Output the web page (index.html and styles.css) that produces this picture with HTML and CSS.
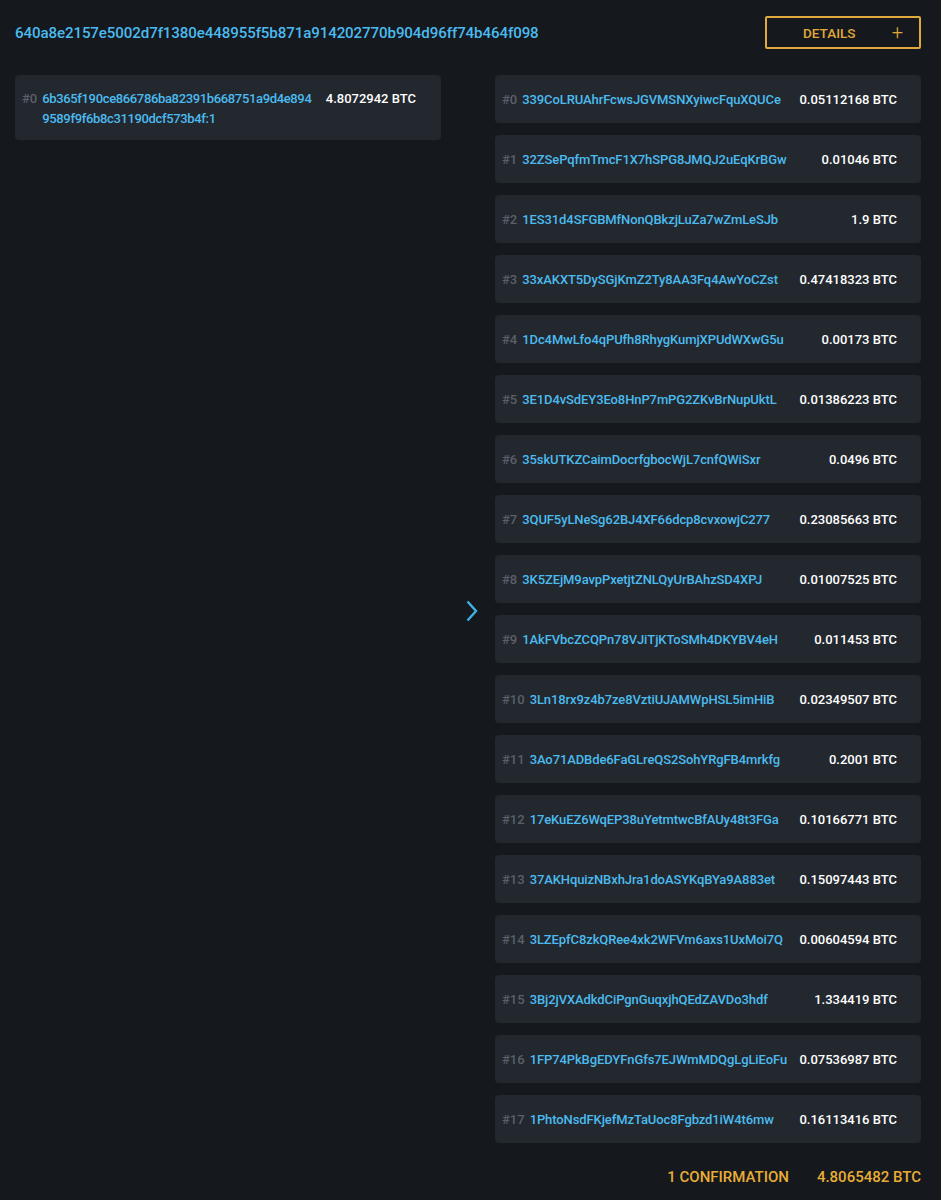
FILE: index.html
```html
<!DOCTYPE html>
<html>
<head>
<meta charset="utf-8">
<link rel="stylesheet" href="styles.css">
</head>
<body>
<div class="page">
  <header class="head">
    <a class="txid">640a8e2157e5002d7f1380e448955f5b871a914202770b904d96ff74b464f098</a>
    <button class="details">DETAILS <span class="plus">+</span></button>
  </header>
  <main class="flow">
    <section class="col">
      <div class="io io-in">
        <span class="idx">#0</span>
        <span class="addr addr-wrap">6b365f190ce866786ba82391b668751a9d4e894<br>9589f9f6b8c31190dcf573b4f:1</span>
        <span class="amt amt-in">4.8072942 BTC</span>
      </div>
    </section>
    <div class="arrow">
      <svg width="14" height="22" viewBox="0 0 14 22"><path d="M2.5 1.5 L11 11 L2.5 20.5" fill="none" stroke="#3fb0e8" stroke-width="2.4"/></svg>
    </div>
    <section class="col outs">
      <div class="io"><span class="lead"><span class="idx">#0</span><span class="addr">339CoLRUAhrFcwsJGVMSNXyiwcFquXQUCe</span></span><span class="amt">0.05112168 BTC</span></div>
      <div class="io"><span class="lead"><span class="idx">#1</span><span class="addr">32ZSePqfmTmcF1X7hSPG8JMQJ2uEqKrBGw</span></span><span class="amt">0.01046 BTC</span></div>
      <div class="io"><span class="lead"><span class="idx">#2</span><span class="addr">1ES31d4SFGBMfNonQBkzjLuZa7wZmLeSJb</span></span><span class="amt">1.9 BTC</span></div>
      <div class="io"><span class="lead"><span class="idx">#3</span><span class="addr">33xAKXT5DySGjKmZ2Ty8AA3Fq4AwYoCZst</span></span><span class="amt">0.47418323 BTC</span></div>
      <div class="io"><span class="lead"><span class="idx">#4</span><span class="addr">1Dc4MwLfo4qPUfh8RhygKumjXPUdWXwG5u</span></span><span class="amt">0.00173 BTC</span></div>
      <div class="io"><span class="lead"><span class="idx">#5</span><span class="addr">3E1D4vSdEY3Eo8HnP7mPG2ZKvBrNupUktL</span></span><span class="amt">0.01386223 BTC</span></div>
      <div class="io"><span class="lead"><span class="idx">#6</span><span class="addr">35skUTKZCaimDocrfgbocWjL7cnfQWiSxr</span></span><span class="amt">0.0496 BTC</span></div>
      <div class="io"><span class="lead"><span class="idx">#7</span><span class="addr">3QUF5yLNeSg62BJ4XF66dcp8cvxowjC277</span></span><span class="amt">0.23085663 BTC</span></div>
      <div class="io"><span class="lead"><span class="idx">#8</span><span class="addr">3K5ZEjM9avpPxetjtZNLQyUrBAhzSD4XPJ</span></span><span class="amt">0.01007525 BTC</span></div>
      <div class="io"><span class="lead"><span class="idx">#9</span><span class="addr">1AkFVbcZCQPn78VJiTjKToSMh4DKYBV4eH</span></span><span class="amt">0.011453 BTC</span></div>
      <div class="io"><span class="lead"><span class="idx">#10</span><span class="addr">3Ln18rx9z4b7ze8VztiUJAMWpHSL5imHiB</span></span><span class="amt">0.02349507 BTC</span></div>
      <div class="io"><span class="lead"><span class="idx">#11</span><span class="addr">3Ao71ADBde6FaGLreQS2SohYRgFB4mrkfg</span></span><span class="amt">0.2001 BTC</span></div>
      <div class="io"><span class="lead"><span class="idx">#12</span><span class="addr">17eKuEZ6WqEP38uYetmtwcBfAUy48t3FGa</span></span><span class="amt">0.10166771 BTC</span></div>
      <div class="io"><span class="lead"><span class="idx">#13</span><span class="addr">37AKHquizNBxhJra1doASYKqBYa9A883et</span></span><span class="amt">0.15097443 BTC</span></div>
      <div class="io"><span class="lead"><span class="idx">#14</span><span class="addr">3LZEpfC8zkQRee4xk2WFVm6axs1UxMoi7Q</span></span><span class="amt">0.00604594 BTC</span></div>
      <div class="io"><span class="lead"><span class="idx">#15</span><span class="addr">3Bj2jVXAdkdCiPgnGuqxjhQEdZAVDo3hdf</span></span><span class="amt">1.334419 BTC</span></div>
      <div class="io"><span class="lead"><span class="idx">#16</span><span class="addr">1FP74PkBgEDYFnGfs7EJWmMDQgLgLiEoFu</span></span><span class="amt">0.07536987 BTC</span></div>
      <div class="io"><span class="lead"><span class="idx">#17</span><span class="addr">1PhtoNsdFKjefMzTaUoc8Fgbzd1iW4t6mw</span></span><span class="amt">0.16113416 BTC</span></div>
    </section>
  </main>
  <footer class="foot">
    <span>1 CONFIRMATION</span>
    <span>4.8065482 BTC</span>
  </footer>
</div>
</body>
</html>
```
FILE: styles.css
```css
html, body {
  margin: 0;
  padding: 0;
  background: #15181d;
}
body {
  font-family: Roboto, "Liberation Sans", sans-serif;
  font-weight: 500;
  color: #ffffff;
}
.page {
  width: 941px;
  height: 1200px;
  box-sizing: border-box;
  padding: 16px 20px 0 15px;
}
.head {
  display: flex;
  justify-content: space-between;
  align-items: center;
  height: 33px;
}
.txid {
  color: #4bbbef;
  font-size: 15.1px;
  letter-spacing: -0.1px;
  font-weight: 500;
}
.details {
  width: 156px;
  height: 33px;
  box-sizing: border-box;
  border: 2px solid #e1a93a;
  border-radius: 2px;
  background: transparent;
  color: #e1a93a;
  font-family: Roboto, "Liberation Sans", sans-serif;
  font-weight: 500;
  font-size: 13.5px;
  display: flex;
  align-items: center;
  padding: 0 16px 0 36px;
  justify-content: space-between;
}
.plus {
  font-size: 20px;
  font-weight: 300;
  line-height: 1;
  margin-top: -2px;
}
.flow {
  display: flex;
  margin-top: 26px;
  align-items: flex-start;
}
.col {
  width: 426px;
}
.outs {
  display: flex;
  flex-direction: column;
  gap: 12px;
}
.arrow {
  width: 54px;
  align-self: center;
  display: flex;
  justify-content: center;
  padding-left: 7px;
  padding-top: 3px;
  box-sizing: border-box;
}
.io {
  background: #23272e;
  border-radius: 4px;
  height: 48px;
  box-sizing: border-box;
  padding: 0 24px 0 7px;
  display: flex;
  align-items: center;
  justify-content: space-between;
  font-size: 13px;
}
.io-in {
  height: 65px;
  align-items: flex-start;
  padding: 14px 25px 0 7px;
  justify-content: flex-start;
  line-height: 19.5px;
}
.lead {
  display: flex;
  align-items: center;
}
.idx {
  color: #5a606a;
  margin-right: 5px;
}
.addr {
  color: #4bbbef;
  letter-spacing: -0.1px;
}
.addr-wrap {
  letter-spacing: -0.35px;
}
.amt {
  color: #ffffff;
}
.amt-in {
  margin-left: auto;
}
.foot {
  display: flex;
  justify-content: flex-end;
  gap: 28px;
  margin-top: 24px;
  color: #e8ad35;
  font-size: 15px;
  line-height: 20px;
}
```
